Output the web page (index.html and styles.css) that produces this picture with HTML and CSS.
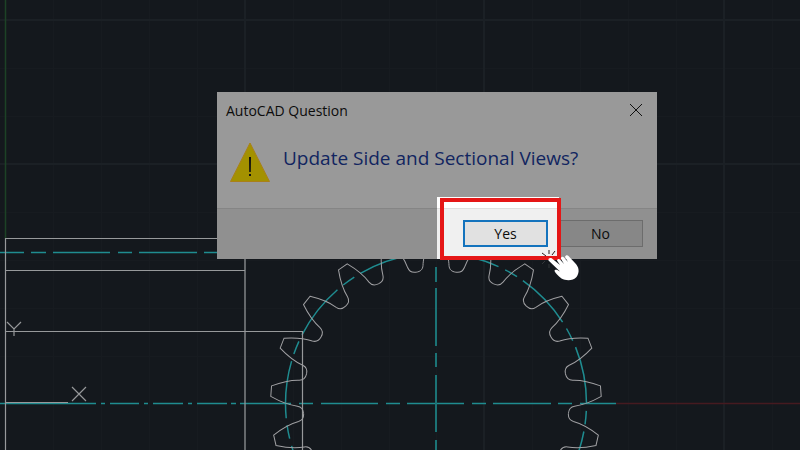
FILE: index.html
```
<!DOCTYPE html>
<html lang="en">

<head>
    <meta charset="UTF-8">
    <meta name="viewport" content="width=device-width, initial-scale=1.0">
    <link rel="stylesheet" href="styles.css">
    <title>AutoCAD Question</title>
</head>

<body>
    <main class="workspace">
        <svg class="drawing" viewBox="0 0 800 450" preserveAspectRatio="xMinYMin slice" aria-hidden="true">
            <defs>
                <path id="tooth" d="M-19.8 -131.3C-15.500 -131.9 -13.3 -134 -13 -138C-12.8 -143 -12 -151 -5.3 -165.3H5.3C12 -151 12.8 -143 13 -138C13.3 -134 15.500 -131.9 19.8 -131.3" />
            </defs>

            <!-- grid -->
            <path class="grid-minor" d="M53.5 0V450M101.5 0V450M149.5 0V450M197.5 0V450M293.5 0V450M341.5 0V450M389.5 0V450M436.5 0V450M532.5 0V450M580.5 0V450M628.5 0V450M676.5 0V450M772.5 0V450M0 68.5H800M0 116.5H800M0 212.5H800M0 260.5H800M0 308.5H800M0 356.5H800" />
            <path class="grid-major" d="M245 0V450M484 0V450M724 0V450M0 20H800M0 164H800" />
            <path class="axis-y" d="M5.5 0V238" />
            <path class="axis-x" d="M616 403.5H800" />

            <!-- centre lines -->
            <path class="centre" d="M0 252.5H24M31 252.5H46M53 252.5H110M118 252.5H132M139 252.5H197M204 252.5H218" />
            <path class="centre" d="M0 403.5H96M101 403.5H105M110 403.5H139M144 403.5H148M153 403.5H183M188 403.5H192M197 403.5H227M231 403.5H236M240 403.5H291M299 403.5H313M321 403.5H378M386 403.5H400M407 403.5H464M472 403.5H486M493 403.5H551M558 403.5H572M580 403.5H616" />
            <path class="centre wide" d="M436 267V282M436 288V346M436 353V367M436 375V432M436 440V450" />
            <circle class="centre" r="150.5" pathLength="360" stroke-dasharray="22 2.7 5.2 2.827" transform="translate(436 403.5) scale(1 -1)" />

            <!-- side view -->
            <path class="edge" d="M218 238.5H5.5V450M5.5 270.5H245M245 255V450M5.5 331.5H302.5V450" />

            <!-- gear -->
            <g class="gear" transform="translate(436 403.5)">
                <use href="#tooth" transform="rotate(-102.86)" />
                <use href="#tooth" transform="rotate(-85.71)" />
                <use href="#tooth" transform="rotate(-68.57)" />
                <use href="#tooth" transform="rotate(-51.43)" />
                <use href="#tooth" transform="rotate(-34.29)" />
                <use href="#tooth" transform="rotate(-17.14)" />
                <use href="#tooth" />
                <use href="#tooth" transform="rotate(17.14)" />
                <use href="#tooth" transform="rotate(34.29)" />
                <use href="#tooth" transform="rotate(51.43)" />
                <use href="#tooth" transform="rotate(68.57)" />
                <use href="#tooth" transform="rotate(85.71)" />
                <use href="#tooth" transform="rotate(102.86)" />
            </g>

            <!-- UCS icon -->
            <path class="ucs" d="M5 402.5H68M7 322L14 329L21 322M14 329V336M72 387L86 401M86 387L72 401" />
        </svg>

        <section class="dialog" role="dialog" aria-labelledby="dialog-title">
            <header class="title-bar">
                <h1 id="dialog-title">AutoCAD Question</h1>
                <button class="close" aria-label="Close">
                    <svg width="12" height="12" viewBox="0 0 12 12">
                        <path d="M0 0L12 12M12 0L0 12" />
                    </svg>
                </button>
            </header>
            <div class="message">
                <svg class="warning" width="40" height="40" viewBox="0 0 40 40" aria-hidden="true">
                    <path class="warning-sign" d="M20 1L39.500 39.500H0.500Z" />
                    <path class="warning-mark" d="M19 15H21L20.800 30H19.200ZM19 32H21V34H19Z" />
                </svg>
                <p>Update Side and Sectional Views?</p>
            </div>
            <footer class="actions">
                <div class="spotlight"></div>
                <button class="btn btn-default">Yes</button>
                <button class="btn">No</button>
                <div class="frame"></div>
                <svg class="pointer" width="40" height="36" viewBox="0 0 40 36" aria-hidden="true">
                    <path class="click" d="M2 6L6 9M9 3V7M15 4L12 8" />
                    <path class="click-faint" d="M2 17L5 14M9 17V21" />
                    <path class="hand" d="M8.500 13.500C8 11 10.500 10.500 12 11.500L20 18L17 13.500C17 12 19 11.500 20 12.500L24 17L20.800 11.500C21 9.500 23 9 24 10.500L28 15L25 10C25.500 8 27.500 8 28.500 9L35 16C39 20 40 25 36.500 30C33 34 26 34 21.500 31.500C18 29 15.500 26 14.500 24C14.500 22.500 16.500 22 19 24L20 24.500Z" />
                </svg>
            </footer>
        </section>
    </main>
</body>

</html>
```
FILE: styles.css
```
body {
    margin: 0;
    background: #14181d;
    font-family: "Open Sans", "Noto Sans", sans-serif;
}

.workspace {
    position: relative;
    min-height: 100vh;
    overflow: hidden;
}

.drawing {
    position: absolute;
    width: 100%;
    height: 100%;
    fill: none;
}

.grid-minor {
    stroke: #171b20;
}

.grid-major {
    stroke: #1b2025;
    stroke-width: 2;
}

.axis-y {
    stroke: #1c4226;
    stroke-width: 1.5;
}

.axis-x {
    stroke: #461a20;
    stroke-width: 1.5;
}

.centre {
    stroke: #1f8c90;
    stroke-width: 1.5;
}

.wide {
    stroke: #1b7376;
    stroke-width: 2;
}

.edge {
    stroke: #97999b;
    stroke-width: 1.2;
}

.gear {
    stroke: #a0a0a3;
}

.ucs {
    stroke: #96989a;
    stroke-width: 1.2;
}

/* dialog */
.dialog {
    position: absolute;
    top: 92px;
    left: 217px;
    width: 440px;
    background: #999999;
    color: #0c0c0c;
}

.title-bar {
    display: flex;
    align-items: center;
    justify-content: space-between;
    height: 36px;
    padding: 0 15px 0 9px;
}

.title-bar h1 {
    margin: 0;
    font-size: 14px;
    font-weight: normal;
}

.close {
    display: flex;
    padding: 0;
    border: none;
    background: none;
}

.close svg {
    overflow: visible;
    stroke: #111111;
}

.message {
    display: flex;
    gap: 13px;
    height: 66px;
    padding: 14px 13px 0;
}

.message p {
    margin: 0;
    color: #112560;
    font-size: 19px;
    line-height: 32px;
}

.warning-sign {
    fill: #a39100;
    stroke: #a98019;
}

.warning-mark {
    fill: #111111;
}

.actions {
    position: relative;
    display: flex;
    justify-content: flex-end;
    gap: 10px;
    padding: 11px 14px 12px;
    border-top: 1px solid #858585;
    background: #909090;
}

.btn {
    position: relative;
    width: 85px;
    height: 27px;
    padding: 0;
    border: 1px solid #6c6c6c;
    background: #878787;
    color: #0c0c0c;
    font-family: inherit;
    font-size: 14px;
    line-height: 20px;
}

.btn-default {
    border: 2px solid #1473bd;
    background: #e1e1e1;
}

/* highlighted area around the default button */
.spotlight {
    position: absolute;
    top: -12px;
    bottom: 0;
    left: 220px;
    width: 122px;
    background: linear-gradient(#ffffff 11px, #dfdfdf 11px, #dfdfdf 12px, #f0f0f0 12px);
}

.frame {
    position: absolute;
    top: -11px;
    bottom: -1px;
    left: 223px;
    width: 113px;
    border: 4px solid #e51616;
}

.pointer {
    position: absolute;
    top: 38px;
    left: 323px;
}

.click {
    fill: none;
    stroke: #2b1c1c;
}

.click-faint {
    stroke: #33363a;
}

.hand {
    fill: #ffffff;
}
```
